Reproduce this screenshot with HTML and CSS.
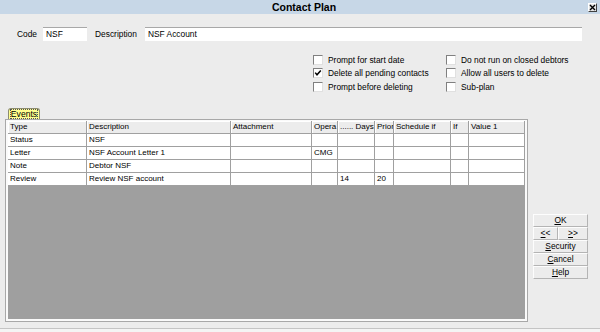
FILE: index.html
```html
<!DOCTYPE html>
<html lang="en">
<head>
    <meta charset="UTF-8">
    <title>Contact Plan</title>
    <link rel="stylesheet" href="styles.css">
</head>
<body>
    <div class="window">
        <div class="titlebar">
            <span></span>
            <span class="title">Contact Plan</span>
            <span class="close"><svg viewBox="0 0 7 7" width="7" height="7"><path d="M1 1L6 6M6 1L1 6" stroke="#000" stroke-width="1.4"/></svg></span>
        </div>

        <div class="fields">
            <label>Code</label>
            <span class="field code">NSF</span>
            <label>Description</label>
            <span class="field desc">NSF Account</span>
        </div>

        <div class="options">
            <div class="check"><span class="box"></span>Prompt for start date</div>
            <div class="check"><span class="box"></span>Do not run on closed debtors</div>
            <div class="check"><span class="box"><svg viewBox="0 0 8 8" width="8" height="8"><polyline points="1.2,3.6 3,5.8 6.8,1.4" fill="none" stroke="#000" stroke-width="1.5"/></svg></span>Delete all pending contacts</div>
            <div class="check"><span class="box"></span>Allow all users to delete</div>
            <div class="check"><span class="box"></span>Prompt before deleting</div>
            <div class="check"><span class="box"></span>Sub-plan</div>
        </div>

        <div class="main">
            <div class="events">
                <div class="tab"><span>Events</span></div>
                <div class="grid">
                    <div class="rows">
                        <div class="row head">
                            <span>Type</span><span>Description</span><span>Attachment</span><span>Opera</span><span>...... Days</span><span>Prior</span><span>Schedule if</span><span>If</span><span>Value 1</span>
                        </div>
                        <div class="row">
                            <span>Status</span><span>NSF</span><span></span><span></span><span></span><span></span><span></span><span></span><span></span>
                        </div>
                        <div class="row">
                            <span>Letter</span><span>NSF Account Letter 1</span><span></span><span>CMG</span><span></span><span></span><span></span><span></span><span></span>
                        </div>
                        <div class="row">
                            <span>Note</span><span>Debtor NSF</span><span></span><span></span><span></span><span></span><span></span><span></span><span></span>
                        </div>
                        <div class="row">
                            <span>Review</span><span>Review NSF account</span><span></span><span></span><span>14</span><span>20</span><span></span><span></span><span></span>
                        </div>
                    </div>
                </div>
            </div>

            <div class="buttons">
                <button type="button"><u>O</u>K</button>
                <div class="pair">
                    <button type="button"><u>&lt;</u>&lt;</button>
                    <button type="button"><u>&gt;</u>&gt;</button>
                </div>
                <button type="button"><u>S</u>ecurity</button>
                <button type="button"><u>C</u>ancel</button>
                <button type="button"><u>H</u>elp</button>
            </div>
        </div>

        <div class="footer"></div>
    </div>
</body>
</html>
```

FILE: styles.css
```css
body {
    margin: 0;
    background: #ececec;
    font-family: "Liberation Sans", Arial, sans-serif;
    font-size: 8.4px;
    color: #000;
}
.window {
    width: 600px;
    height: 332px;
    display: flex;
    flex-direction: column;
}
.titlebar {
    height: 14px;
    background: #c7d7e7;
    display: grid;
    grid-template-columns: 1fr auto 1fr;
    align-items: center;
}
.title {
    font-weight: bold;
    font-size: 10.5px;
    padding-left: 8px;
}
.close {
    justify-self: end;
    margin-right: 3px;
    width: 7px;
    height: 7px;
    display: flex;
    background: #e4e4e4;
    border: 1px solid;
    border-color: #fff #404040 #404040 #fff;
}
.fields {
    display: flex;
    align-items: center;
    margin-top: 13px;
    padding-left: 17px;
}
.fields label {
    margin-right: 6px;
}
.field {
    height: 13px;
    line-height: 13px;
    background: #fff;
    border-top: 1px solid #a8a8a8;
    padding-left: 3px;
}
.field.code {
    width: 41px;
    margin-right: 8px;
}
.field.desc {
    width: 434px;
    margin-left: 2px;
}
.options {
    display: grid;
    grid-template-columns: 133px auto;
    margin-top: 12px;
    padding-left: 313px;
}
.check {
    height: 13.5px;
    display: flex;
    align-items: center;
    gap: 5px;
    white-space: nowrap;
}
.box {
    width: 8px;
    height: 8px;
    flex: none;
    background: #fff;
    border: 1px solid;
    border-color: #808080 #e0e0e0 #e0e0e0 #808080;
    display: flex;
}
.main {
    display: flex;
    gap: 5px;
    margin-top: 14px;
    padding-left: 5px;
}
.events {
    width: 523px;
    display: flex;
    flex-direction: column;
}
.tab {
    margin-left: 3px;
    width: 30px;
    height: 10px;
    background: #ffff8e;
    border: 1px solid #8c8c70;
    border-bottom: none;
    border-radius: 3px 3px 0 0;
    display: flex;
    align-items: center;
    justify-content: center;
    font-size: 8.6px;
}
.tab span {
    outline: 1px dotted #555;
    line-height: 8px;
}
.grid {
    height: 198px;
    border: 1px solid #a8a8a8;
    padding: 1px 2px 2px 2px;
    background: #fafafa;
}
.rows {
    height: 100%;
    background: #9f9f9f;
}
.row {
    display: grid;
    grid-template-columns: 79px 144px 81px 26px 37px 19px 57px 18px 56px;
    height: 13px;
    font-size: 8px;
}
.row span {
    background: #fff;
    border-right: 1px solid #a0a0a0;
    border-bottom: 1px solid #a0a0a0;
    padding-left: 2px;
    line-height: 12px;
    white-space: nowrap;
    overflow: hidden;
}
.row.head span {
    background: #ececec;
    box-shadow: inset 1px 1px #fff;
}
.buttons {
    width: 55px;
    margin-top: 106px;
    display: flex;
    flex-direction: column;
}
.pair {
    display: grid;
    grid-template-columns: 25px 30px;
}
button {
    height: 13px;
    padding: 0;
    margin: 0;
    font-family: inherit;
    font-size: 8.4px;
    line-height: 11px;
    color: #000;
    background: #ececec;
    border: 1px solid;
    border-color: #fdfdfd #b4b4b4 #b4b4b4 #fdfdfd;
}
.footer {
    margin-top: auto;
    height: 3px;
    border-top: 1px solid #c4c4c4;
    background: #f4f4f4;
}
```
